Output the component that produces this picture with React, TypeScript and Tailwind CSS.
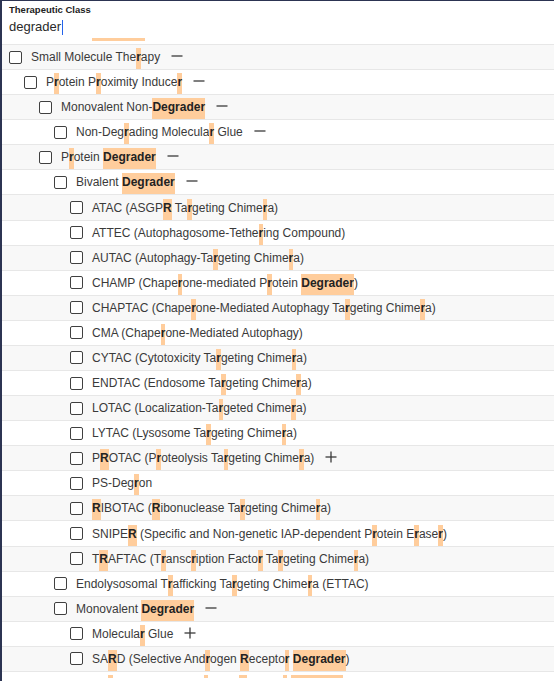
import React from 'react';

type Node = {
  label: string;
  depth: number;
  toggle?: 'minus' | 'plus';
};

const NODES: Node[] = [
  { label: 'Small Molecule Therapy', depth: 0, toggle: 'minus' },
  { label: 'Protein Proximity Inducer', depth: 1, toggle: 'minus' },
  { label: 'Monovalent Non-Degrader', depth: 2, toggle: 'minus' },
  { label: 'Non-Degrading Molecular Glue', depth: 3, toggle: 'minus' },
  { label: 'Protein Degrader', depth: 2, toggle: 'minus' },
  { label: 'Bivalent Degrader', depth: 3, toggle: 'minus' },
  { label: 'ATAC (ASGPR Targeting Chimera)', depth: 4 },
  { label: 'ATTEC (Autophagosome-Tethering Compound)', depth: 4 },
  { label: 'AUTAC (Autophagy-Targeting Chimera)', depth: 4 },
  { label: 'CHAMP (Chaperone-mediated Protein Degrader)', depth: 4 },
  { label: 'CHAPTAC (Chaperone-Mediated Autophagy Targeting Chimera)', depth: 4 },
  { label: 'CMA (Chaperone-Mediated Autophagy)', depth: 4 },
  { label: 'CYTAC (Cytotoxicity Targeting Chimera)', depth: 4 },
  { label: 'ENDTAC (Endosome Targeting Chimera)', depth: 4 },
  { label: 'LOTAC (Localization-Targeted Chimera)', depth: 4 },
  { label: 'LYTAC (Lysosome Targeting Chimera)', depth: 4 },
  { label: 'PROTAC (Proteolysis Targeting Chimera)', depth: 4, toggle: 'plus' },
  { label: 'PS-Degron', depth: 4 },
  { label: 'RIBOTAC (Ribonuclease Targeting Chimera)', depth: 4 },
  { label: 'SNIPER (Specific and Non-genetic IAP-dependent Protein Eraser)', depth: 4 },
  { label: 'TRAFTAC (Transcription Factor Targeting Chimera)', depth: 4 },
  { label: 'Endolysosomal Trafficking Targeting Chimera (ETTAC)', depth: 3 },
  { label: 'Monovalent Degrader', depth: 3, toggle: 'minus' },
  { label: 'Molecular Glue', depth: 4, toggle: 'plus' },
  { label: 'SARD (Selective Androgen Receptor Degrader)', depth: 4 },
];

const INDENT = ['pl-[7px]', 'pl-[22px]', 'pl-[37px]', 'pl-[52px]', 'pl-[68px]'];

// whole "degrader" matches first, every other r on its own
function highlight(label: string) {
  return label.split(/(degrader|r)/gi).map((part, i) =>
    i % 2 === 1 ? (
      <span key={i} className="bg-[#ffcd9c] pt-[2px] pb-[5px] font-bold text-[#222]">
        {part}
      </span>
    ) : (
      <React.Fragment key={i}>{part}</React.Fragment>
    )
  );
}

function ToggleIcon({ kind }: { kind: 'minus' | 'plus' }) {
  return (
    <svg width="12" height="12" viewBox="0 0 12 12" className="ml-[11px] shrink-0 -mt-[2px]">
      <path d="M0.5 6h11" stroke="#3a3a3a" strokeWidth="1.3" />
      {kind === 'plus' && <path d="M6 0.5v11" stroke="#3a3a3a" strokeWidth="1.3" />}
    </svg>
  );
}

function Row({ node, index }: { node: Node; index: number }) {
  return (
    <div
      className={`flex h-[25.08px] items-center border-b border-[#e7e7e7] ${INDENT[node.depth]} ${
        index % 2 === 0 ? 'bg-[#f8f8f8]' : 'bg-white'
      }`}
    >
      <span className="h-[13px] w-[13px] shrink-0 rounded-[2px] border-[1.5px] border-[#404040] bg-white" />
      <span className="ml-[9px] whitespace-nowrap text-[12px] leading-[14px] text-[#3a3a3a]">
        {highlight(node.label)}
      </span>
      {node.toggle && <ToggleIcon kind={node.toggle} />}
    </div>
  );
}

export default function App() {
  return (
    <div className="h-[681px] w-[554px] overflow-hidden border-l-2 border-t border-[#2c3452] bg-white font-['Liberation_Sans',Arial,sans-serif]">
      <div className="flex h-[44px] flex-col border-b border-[#e7e7e7] px-[7px] pt-[3px]">
        <div className="text-[9.5px] font-bold leading-[11px] text-[#222]">Therapeutic Class</div>
        <div className="mt-[4px] flex items-center text-[13px] leading-[16px] text-[#2a2a2a]">
          degrader
          <span className="ml-[1px] h-[15px] w-px bg-[#2563eb]" />
        </div>
        <span className="ml-[83px] mt-[3px] h-[3px] w-[53px] bg-[#ffcd9c]" />
      </div>
      {NODES.map((node, i) => (
        <Row key={node.label} node={node} index={i} />
      ))}
      <div className="flex h-[12px] items-start gap-[4px] bg-white pl-[106px] pt-[3px]">
        <span className="h-[3px] w-[5px] bg-[#ffcd9c]" />
        <span className="ml-[87px] h-[3px] w-[4px] bg-[#ffcd9c]" />
        <span className="ml-[27px] h-[3px] w-[8px] bg-[#ffcd9c]" />
        <span className="ml-[32px] h-[3px] w-[4px] bg-[#ffcd9c]" />
        <span className="h-[3px] w-[52px] bg-[#ffcd9c]" />
      </div>
    </div>
  );
}
